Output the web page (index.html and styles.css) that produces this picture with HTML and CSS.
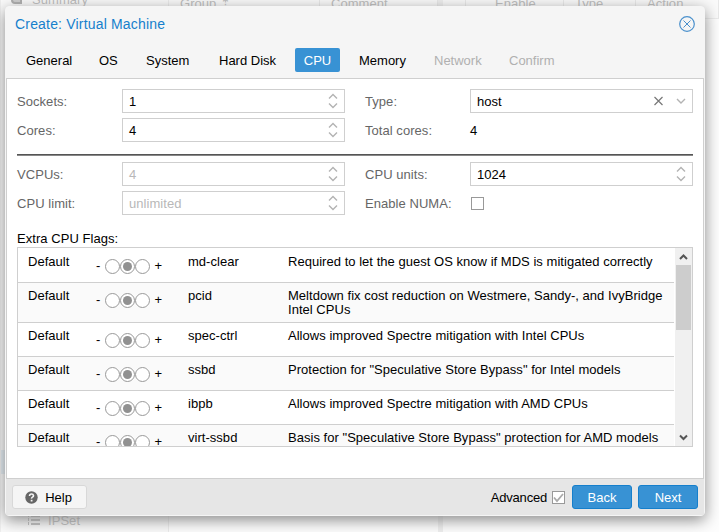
FILE: index.html
```
<!DOCTYPE html>
<html lang="en">
<head>
    <meta charset="UTF-8">
    <title>Create: Virtual Machine</title>
    <link rel="stylesheet" href="styles.css">
</head>
<body>
    <svg class="symbols" width="0" height="0">
        <symbol id="spin" viewBox="0 0 10 16">
            <path d="M1 5.5 5 1.5 9 5.5M1 10.5 5 14.5 9 10.5" fill="none" stroke="#b3b3b3" stroke-width="1.4"/>
        </symbol>
        <symbol id="tristate" viewBox="0 0 45 16">
            <g fill="#fff" stroke="#999">
                <circle cx="7.5" cy="7.5" r="7"/>
                <circle cx="22.5" cy="7.5" r="7"/>
                <circle cx="37.5" cy="7.5" r="7"/>
            </g>
            <circle cx="22.5" cy="7.5" r="4.5" fill="#919191"/>
        </symbol>
    </svg>

    <div class="backdrop">
        <div class="sidebar">
            <div class="side-item"><svg width="11" height="10"><path d="M1 0v6q0 3 3 3h6V0" fill="#ccc" stroke="#aaa" stroke-width="2"/></svg>Summary</div>
            <div class="side-selected"></div>
            <div class="side-item">
                <svg width="13" height="12" fill="none" stroke="#bbb" stroke-width="2"><path d="M4 2h9M4 6h9M4 10h9"/><path d="M1.5 0v12" stroke-width="1" stroke-dasharray="3 1"/></svg>IPSet
            </div>
        </div>
        <div class="grid-panel">
            <div class="col col-group">Group ⇡</div>
            <div class="col">Comment</div>
        </div>
        <div class="splitter"></div>
        <div class="rules-panel">
            <div class="col col-num"></div>
            <div class="col col-enable">Enable</div>
            <div class="col col-type">Type</div>
            <div class="col">Action</div>
        </div>
    </div>

    <div class="window">
        <header class="window-header">
            <span>Create: Virtual Machine</span>
            <svg width="16" height="16" fill="none" stroke="#4a90cc"><circle cx="8" cy="8" r="7.3" stroke-width="1.2"/><path d="M4.5 4.5l7 7M11.5 4.5l-7 7"/></svg>
        </header>
        <nav class="tabs">
            <a class="tab tab-general">General</a>
            <a class="tab tab-os">OS</a>
            <a class="tab tab-system">System</a>
            <a class="tab tab-disk">Hard Disk</a>
            <a class="tab active">CPU</a>
            <a class="tab tab-memory">Memory</a>
            <a class="tab tab-network disabled">Network</a>
            <a class="tab disabled">Confirm</a>
        </nav>

        <main class="panel">
            <div class="form">
                <label>Sockets:</label>
                <div class="field">1<svg class="spin"><use href="#spin"/></svg></div>
                <label class="second">Type:</label>
                <div class="field">host
                    <svg class="combo" width="34" height="12" fill="none"><path d="M2.5 2l8 8M10.500 2l-8 8" stroke="#777" stroke-width="1.2"/><path d="M25 4l4 4 4-4" stroke="#b3b3b3" stroke-width="1.4"/></svg>
                </div>
                <label>Cores:</label>
                <div class="field">4<svg class="spin"><use href="#spin"/></svg></div>
                <label class="second">Total cores:</label>
                <div>4</div>
            </div>
            <hr>
            <div class="form">
                <label>VCPUs:</label>
                <div class="field muted">4<svg class="spin"><use href="#spin"/></svg></div>
                <label class="second">CPU units:</label>
                <div class="field">1024<svg class="spin"><use href="#spin"/></svg></div>
                <label>CPU limit:</label>
                <div class="field muted">unlimited<svg class="spin"><use href="#spin"/></svg></div>
                <label class="second">Enable NUMA:</label>
                <div class="numa"><span class="checkbox"></span></div>
            </div>

            <div class="flags-title">Extra CPU Flags:</div>
            <div class="flags">
                <div class="rows">
                    <div class="row first"><span>Default</span><span class="tri">-<svg><use href="#tristate"/></svg>+</span><span>md-clear</span><span>Required to let the guest OS know if MDS is mitigated correctly</span></div>
                    <div class="row tall"><span>Default</span><span class="tri">-<svg><use href="#tristate"/></svg>+</span><span>pcid</span><span>Meltdown fix cost reduction on Westmere, Sandy-, and IvyBridge<br>Intel CPUs</span></div>
                    <div class="row"><span>Default</span><span class="tri">-<svg><use href="#tristate"/></svg>+</span><span>spec-ctrl</span><span>Allows improved Spectre mitigation with Intel CPUs</span></div>
                    <div class="row"><span>Default</span><span class="tri">-<svg><use href="#tristate"/></svg>+</span><span>ssbd</span><span>Protection for "Speculative Store Bypass" for Intel models</span></div>
                    <div class="row"><span>Default</span><span class="tri">-<svg><use href="#tristate"/></svg>+</span><span>ibpb</span><span>Allows improved Spectre mitigation with AMD CPUs</span></div>
                    <div class="row"><span>Default</span><span class="tri">-<svg><use href="#tristate"/></svg>+</span><span>virt-ssbd</span><span>Basis for "Speculative Store Bypass" protection for AMD models</span></div>
                </div>
                <div class="scrollbar">
                    <svg width="9" height="17" fill="none" stroke="#555" stroke-width="2"><path d="M1 11l3.500-3.500L8 11"/></svg>
                    <div class="thumb"></div>
                    <svg width="9" height="17" fill="none" stroke="#555" stroke-width="2"><path d="M1 6.500l3.500 3.500L8 6.500"/></svg>
                </div>
            </div>
        </main>

        <footer class="window-footer">
            <button class="btn help">
                <svg width="13" height="13"><circle cx="6.500" cy="6.500" r="6.200" fill="#666"/><path d="M4.500 5q.2-2 2-2t2 1.700q0 .9-1 1.400t-.9 1.500" fill="none" stroke="#f5f5f5" stroke-width="1.600"/><path d="M5.700 8.800h1.800v1.700H5.700z" fill="#f5f5f5"/></svg>
                Help
            </button>
            <span class="advanced">Advanced</span>
            <span class="checkbox"><svg width="11" height="11"><path d="M1 5.500l3 3.500L10 2" fill="none" stroke="#aaa" stroke-width="1.800"/></svg></span>
            <button class="btn primary back">Back</button>
            <button class="btn primary">Next</button>
        </footer>
    </div>
</body>
</html>
```

FILE: styles.css
```
* {
    box-sizing: border-box;
}

body {
    margin: 0;
    width: 719px;
    height: 532px;
    overflow: hidden;
    position: relative;
    background: #fdfdfd;
    color: #000;
    font: 13px/15px "Liberation Sans", Arial, sans-serif;
    letter-spacing: 0.05px;
}

svg {
    flex: none;
}

.symbols {
    position: absolute;
}

/* masked page behind the window */
.backdrop {
    display: flex;
    height: 532px;
    color: #bbb;
}

.sidebar {
    display: flex;
    flex-direction: column;
    width: 169px;
    border-left: 1px solid #eee;
    border-right: 1px solid #ebebeb;
    background: #fafafa;
}

.side-item {
    display: flex;
    align-items: center;
    gap: 10px;
    height: 16px;
    padding-left: 10px;
    margin-top: -9px;
}

.side-selected {
    height: 24px;
    margin-top: 443px;
    background: #e0eaf2;
}

.side-selected + .side-item {
    gap: 8px;
    margin-top: 38px;
    padding-left: 26px;
}

.grid-panel,
.rules-panel {
    display: flex;
}

.grid-panel {
    width: 269px;
}

.rules-panel {
    flex: 1;
}

.col {
    flex: 1;
    height: 19px;
    padding-left: 11px;
    line-height: 7px;
    background: #fafafa;
    border-bottom: 1px solid #ebebeb;
    border-right: 1px solid #e8e8e8;
}

.col-group {
    flex: 0 0 151px;
}

.col-num {
    flex: 0 0 23px;
}

.col-enable {
    flex: 0 0 98px;
    padding-left: 29px;
}

.col-type {
    flex: 0 0 72px;
}

.splitter {
    width: 5px;
    background: #eee;
}

/* wizard window */
.window {
    position: absolute;
    left: 5px;
    top: 6px;
    width: 700px;
    height: 510px;
    display: flex;
    flex-direction: column;
    background: #f5f5f5;
    border: 1px solid #f5f5f5;
    border-radius: 4px;
    box-shadow: 0 4px 15px #888;
}

.window-header {
    display: flex;
    align-items: center;
    justify-content: space-between;
    height: 34px;
    padding: 0 9px;
    color: #157fcc;
    font-size: 14px;
    letter-spacing: 0.18px;
}

.tabs {
    display: flex;
    height: 37px;
    padding: 7px 0 6px 20px;
}

.tab {
    line-height: 25px;
    letter-spacing: 0;
}

.tab-general {
    width: 73px;
}

.tab-os {
    width: 47px;
}

.tab-system {
    width: 73px;
}

.tab-disk {
    width: 76px;
}

.tab.active {
    width: 45px;
    margin-right: 19px;
    border-radius: 2px;
    background: #3892d4;
    color: #fff;
    text-align: center;
}

.tab-memory {
    width: 75px;
}

.tab-network {
    width: 75px;
}

.tab.disabled {
    color: #b0b0b0;
}

.panel {
    height: 401px;
    padding: 10px 10px 0;
    background: #fff;
    border: 1px solid #cfcfcf;
}

.form {
    display: grid;
    grid-template-columns: 105px 223px 125px 223px;
    grid-auto-rows: 24px;
    row-gap: 5px;
    align-items: center;
}

.form label {
    color: #666;
}

.form .second {
    padding-left: 20px;
}

.field {
    display: flex;
    align-items: center;
    justify-content: space-between;
    height: 24px;
    padding: 0 6px;
    border: 1px solid #cfcfcf;
}

.muted {
    color: #b8b8b8;
}

.spin {
    width: 10px;
    height: 16px;
}

.numa {
    padding-left: 1px;
    padding-top: 1px;
}

.checkbox {
    display: block;
    width: 13px;
    height: 13px;
    border: 1px solid #999;
    background: #fff;
}

.checkbox svg {
    display: block;
}

hr {
    height: 2px;
    margin: 12px 0 6px;
    border: 0;
    border-top: 1px solid #555;
    border-bottom: 1px solid #888;
}

.flags-title {
    margin-top: 16px;
    height: 16px;
}

.flags {
    display: flex;
    height: 200px;
    border: 1px solid #cfcfcf;
    overflow: hidden;
}

.rows {
    width: 657px;
}

.row {
    display: grid;
    grid-template-columns: 68px 92px 100px 1fr;
    height: 34px;
    padding: 6px 0 0 10px;
    line-height: 14px;
    letter-spacing: 0.03px;
    white-space: nowrap;
    border-bottom: 1px solid #cfcfcf;
}

.row:nth-child(even) {
    background: #fafafa;
}

.row.first {
    height: 35px;
    padding-top: 7px;
}

.row.tall {
    height: 40px;
}

.tri {
    display: flex;
    gap: 4.6px;
    padding-top: 4px;
}

.tri svg {
    width: 45px;
    height: 16px;
}

.scrollbar {
    display: flex;
    flex-direction: column;
    align-items: center;
    width: 17px;
    margin-left: 1px;
    background: #f0f0f0;
}

.thumb {
    width: 15px;
    height: 65px;
    margin-bottom: auto;
    background: #cdcdcd;
}

.window-footer {
    display: flex;
    align-items: center;
    flex: 1;
    padding: 0 6px;
    background: #e6e6e6;
}

.btn {
    display: flex;
    align-items: center;
    justify-content: center;
    width: 60px;
    height: 24px;
    padding: 0;
    border: 1px solid #157fcc;
    border-radius: 3px;
    background: #3892d4;
    color: #fff;
    font: inherit;
}

.help {
    gap: 7px;
    width: 75px;
    padding-right: 2px;
    margin-right: auto;
    background: #f5f5f5;
    border-color: #d8d8d8;
    color: #000;
}

.advanced {
    margin-right: 5px;
    letter-spacing: -0.2px;
}

.back {
    margin: 0 6px 0 7px;
}
```
